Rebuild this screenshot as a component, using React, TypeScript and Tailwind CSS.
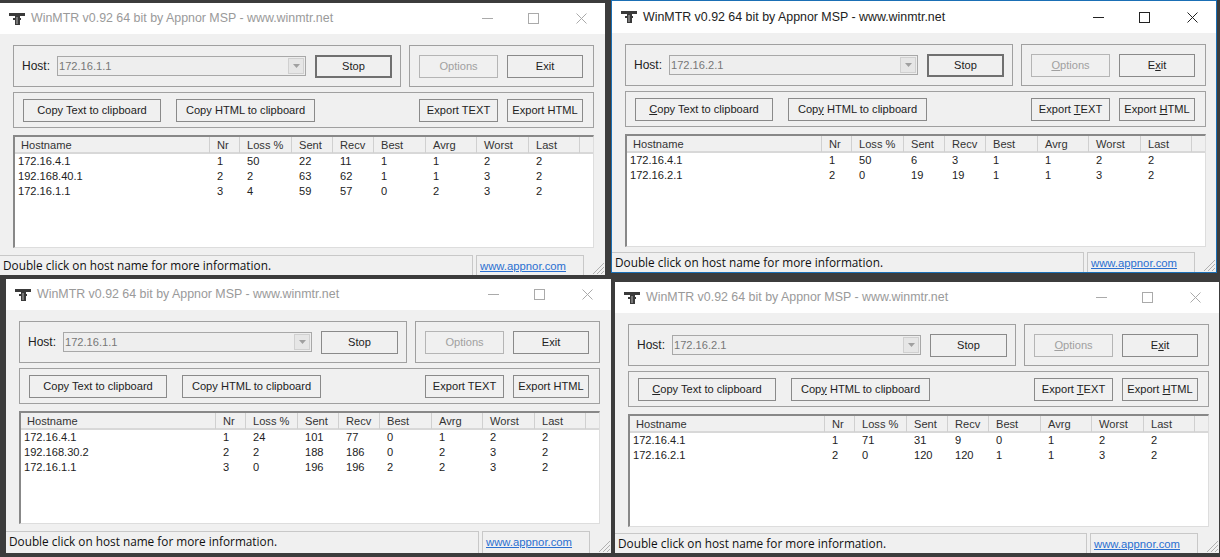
import React from 'react';

type Win = {
  x: number;
  y: number;
  w: number;
  h: number;
  host: string;
  titleH: string;
  statusGap: string;
  active?: boolean;
  blue?: boolean;
  mnemonics?: boolean;
  focusStop?: boolean;
  rows: string[][];
};

const windows: Win[] = [
  {
    x: 0, y: 3, w: 605, h: 272, host: '172.16.1.1', titleH: 'h-[31px]', statusGap: 'mt-[7px]', focusStop: true,
    rows: [
      ['172.16.4.1', '1', '50', '22', '11', '1', '1', '2', '2'],
      ['192.168.40.1', '2', '2', '63', '62', '1', '1', '3', '2'],
      ['172.16.1.1', '3', '4', '59', '57', '0', '2', '3', '2'],
    ],
  },
  {
    x: 611, y: 0, w: 606, h: 273, host: '172.16.2.1', titleH: 'h-[32px]', statusGap: 'mt-[5px]', active: true, blue: true, mnemonics: true, focusStop: true,
    rows: [
      ['172.16.4.1', '1', '50', '6', '3', '1', '1', '2', '2'],
      ['172.16.2.1', '2', '0', '19', '19', '1', '1', '3', '2'],
    ],
  },
  {
    x: 6, y: 279, w: 605, h: 274, host: '172.16.1.1', titleH: 'h-[31px]', statusGap: 'mt-[7px]',
    rows: [
      ['172.16.4.1', '1', '24', '101', '77', '0', '1', '2', '2'],
      ['192.168.30.2', '2', '2', '188', '186', '0', '2', '3', '2'],
      ['172.16.1.1', '3', '0', '196', '196', '2', '2', '3', '2'],
    ],
  },
  {
    x: 615, y: 282, w: 604, h: 271, host: '172.16.2.1', titleH: 'h-[31px]', statusGap: 'mt-[6px]', mnemonics: true,
    rows: [
      ['172.16.4.1', '1', '71', '31', '9', '0', '1', '2', '2'],
      ['172.16.2.1', '2', '0', '120', '120', '1', '1', '3', '2'],
    ],
  },
];

const headers = ['Hostname', 'Nr', 'Loss %', 'Sent', 'Recv', 'Best', 'Avrg', 'Worst', 'Last'];
const colClass = 'grid grid-cols-[195px_30px_52px_41px_41px_52px_51px_52px_51px_1fr]';

const AppIcon = () => (
  <svg width="16" height="14" viewBox="0 0 16 14" className="shrink-0">
    <path d="M0 1h16v3h-5v2h1v2h-1v5H6V8H4V6h2V4H0z" fill="#3a3a3a" />
    <path d="M7 5h2v7H7z" fill="#777" />
  </svg>
);

const WinButton = ({ w, focus, disabled, children }: { w: string; focus?: boolean; disabled?: boolean; children: React.ReactNode }) => (
  <div
    className={`${w} h-[23px] flex items-center justify-center bg-[#f0f0f0] whitespace-nowrap ${
      focus ? 'border-2 border-[#707070]' : disabled ? 'border border-[#b5b5b5] text-[#a0a0a0]' : 'border border-[#8a8a8a]'
    }`}
  >
    <span>{children}</span>
  </div>
);

const Mn = ({ on, children }: { on?: boolean; children: string }) => (on ? <span className="underline">{children}</span> : <>{children}</>);

const WinMtr = ({ win }: { win: Win }) => {
  const m = win.mnemonics;
  return (
    <div
      className={`absolute flex flex-col bg-[#f0f0f0] overflow-hidden ${win.blue ? 'border border-[#1a6fb5]' : ''}`}
      style={{ left: win.x, top: win.y, width: win.w, height: win.h }}
    >
      {/* title bar */}
      <div className={`${win.titleH} shrink-0 bg-white flex items-center pl-[9px]`}>
        <AppIcon />
        <span className={`ml-[6px] text-[12.4px] ${win.active ? 'text-[#222]' : 'text-[#9a9a9a]'}`}>
          WinMTR v0.92 64 bit by Appnor MSP - www.winmtr.net
        </span>
        <div className="ml-auto flex items-center">
          <span className={`w-[11px] h-px ${win.active ? 'bg-[#222]' : 'bg-[#aaa]'}`} />
          <span className={`ml-[35px] w-[11px] h-[11px] border ${win.active ? 'border-[#222]' : 'border-[#aaa]'}`} />
          <svg width="11" height="11" viewBox="0 0 11 11" className="ml-[37px] mr-[18px]">
            <path d="M.5.5l10 10M10.500.5l-10 10" stroke={win.active ? '#222' : '#aaa'} fill="none" />
          </svg>
        </div>
      </div>

      <div className="w-[581px] ml-[13px] shrink-0 flex flex-col pt-[11px] gap-[5px] text-[11.1px] text-[#222]">
        {/* host + options */}
        <div className="flex gap-[8px]">
          <div className="w-[388px] h-[42px] border border-[#a0a0a0] flex items-center pl-[8px] pr-[8px]">
            <span className="text-[12px]">Host:</span>
            <div className="ml-[7px] w-[250px] h-[20px] border border-[#a8a8a8] bg-[#eeeeee] flex items-center pl-px text-[#777]">
              <span>{win.host}</span>
              <div className="ml-auto w-[16px] h-[16px] mr-px bg-[#e6e6e6] border border-[#d0d0d0] flex items-center justify-center">
                <svg width="7" height="4" viewBox="0 0 7 4"><path d="M0 0h7L3.500 4z" fill="#a0a0a0" /></svg>
              </div>
            </div>
            <div className="ml-[9px]">
              <WinButton w="w-[77px]" focus={win.focusStop}>Stop</WinButton>
            </div>
          </div>
          <div className="flex-1 h-[42px] border border-[#a0a0a0] flex items-center pl-[9px] gap-[9px]">
            <WinButton w="w-[79px]" disabled><Mn on={m}>O</Mn>ptions</WinButton>
            <WinButton w="w-[76px]">E<Mn on={m}>x</Mn>it</WinButton>
          </div>
        </div>

        {/* copy/export */}
        <div className="h-[36px] border border-[#a0a0a0] flex items-center pl-[9px] pr-[10px]">
          <WinButton w="w-[138px]"><Mn on={m}>C</Mn>opy Text to clipboard</WinButton>
          <div className="ml-[15px]">
            <WinButton w="w-[139px]">Cop<Mn on={m}>y</Mn> HTML to clipboard</WinButton>
          </div>
          <div className="ml-auto flex gap-[9px]">
            <WinButton w="w-[79px]">Export <Mn on={m}>T</Mn>EXT</WinButton>
            <WinButton w="w-[76px]">Export <Mn on={m}>H</Mn>TML</WinButton>
          </div>
        </div>

        {/* host list */}
        <div className="mt-[2px] h-[113px] bg-white border-l-2 border-t-2 border-l-[#888] border-t-[#888] border-r border-b border-r-[#ddd] border-b-[#ddd] flex flex-col">
          <div className={`${colClass} h-[17px] bg-[#f0f0f0] border-b-2 border-[#d8d8d8] text-[#333]`}>
            {headers.map((h, i) => (
              <div key={h} className={`${i === 0 ? 'pl-[6px]' : 'pl-[7px]'} border-r border-[#d0d0d0] leading-[16px]`}>{h}</div>
            ))}
            <div />
          </div>
          {win.rows.map((row, i) => (
            <div key={i} className={`${colClass} h-[15px] leading-[15px]`}>
              {row.map((c, j) => (
                <div key={j} className={j === 0 ? 'pl-[3px]' : 'pl-[7px]'}>{c}</div>
              ))}
            </div>
          ))}
        </div>
      </div>

      {/* status bar */}
      <div className={`flex-1 min-h-0 ${win.statusGap} flex items-stretch`}>
        <div className="flex-1 border-t border-r border-[#c8c8c8] pl-[3px] pt-[2px] leading-[15px] text-[11.8px] font-['Open_Sans',sans-serif] text-[#111]">
          Double click on host name for more information.
        </div>
        <div className="w-[108px] ml-[3px] border-t border-l border-r border-[#c8c8c8] pl-[3px] pt-[3px] leading-[15px] text-[11.3px] text-[#2a6fd0] underline">
          www.appnor.com
        </div>
        <div className="w-[21px] flex items-end justify-end">
          <svg width="14" height="14" viewBox="0 0 14 14">
            <path d="M13 2L2 13M13 6l-7 7M13 10l-3 3" stroke="#b0b0b0" fill="none" />
          </svg>
        </div>
      </div>
    </div>
  );
};

export default function App() {
  return (
    <div className="relative w-[1220px] h-[557px] overflow-hidden bg-[#3c3c3c] font-['Liberation_Sans',sans-serif]">
      {windows.map((win) => (
        <WinMtr key={win.x} win={win} />
      ))}
    </div>
  );
}
